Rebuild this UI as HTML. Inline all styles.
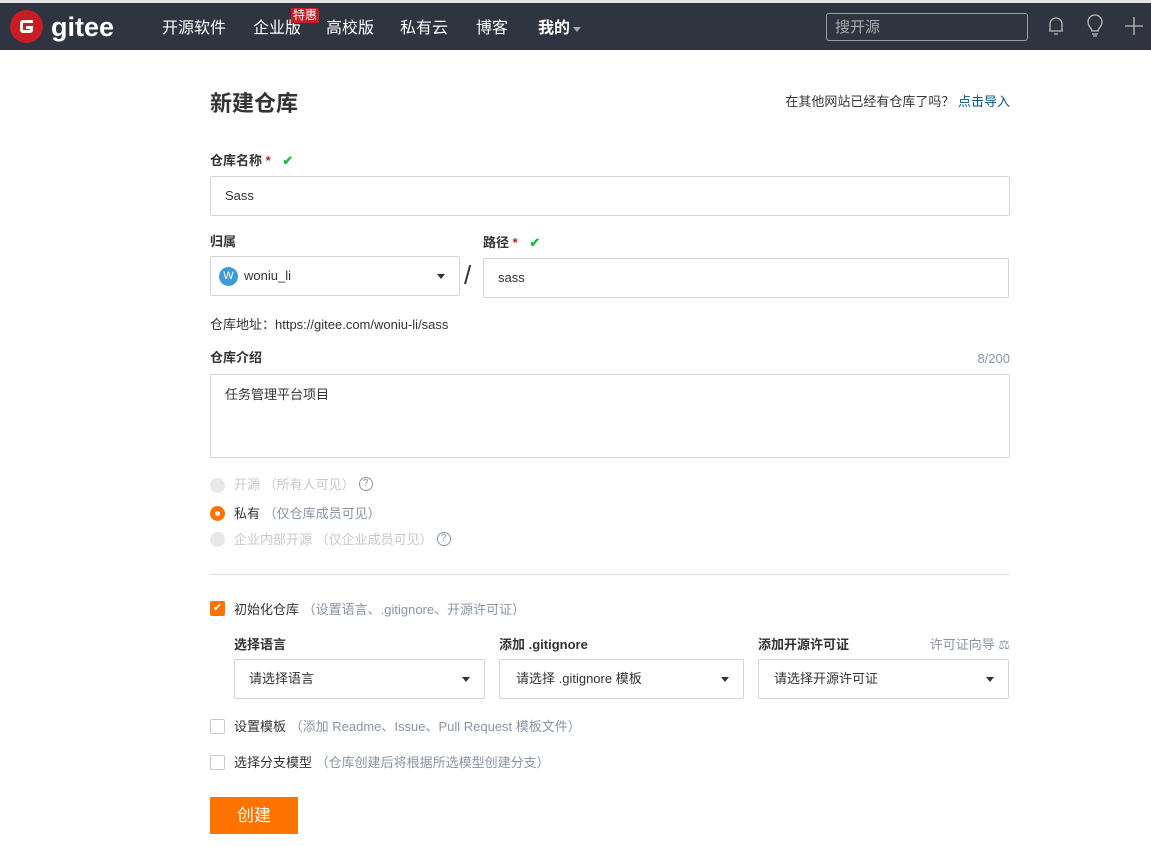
<!DOCTYPE html><html><head><meta charset="utf-8"><style>
*{box-sizing:border-box;margin:0;padding:0}
body{width:1151px;height:846px;background:#fff;font-family:"Liberation Sans","Noto Sans CJK SC",sans-serif;color:#333;font-size:13px;position:relative;overflow:hidden;line-height:1.2}
.a{position:absolute;white-space:nowrap}
.nav{position:absolute;left:0;top:3px;width:1151px;height:47px;background:#2e3440}
.top{position:absolute;left:0;top:0;width:1151px;height:3px;background:#e5e5e5}
.nl{color:#fff;font-size:16px;top:19px}
.inp{position:absolute;border:1px solid #d4d4d5;border-radius:2px;background:#fff;font-size:13px;color:#333;padding-left:14px;display:flex;align-items:center}
.lbl{font-size:13px;font-weight:bold;color:#333}
.gray{color:#8a94a6}
.caret{position:absolute;right:14px;top:50%;margin-top:-2px;border-left:4px solid transparent;border-right:4px solid transparent;border-top:5px solid #333}
.rad{position:absolute;width:15px;height:15px;border-radius:50%;background:#e8e8e8}
.chk{position:absolute;width:15px;height:15px;border:1px solid #c8c8c8;border-radius:2px;background:#fff}
.q{display:inline-block;width:14px;height:14px;border:1.3px solid #8a94a6;border-radius:50%;font-size:10px;line-height:11px;text-align:center;color:#8a94a6;vertical-align:middle;margin-left:4px;position:relative;top:-2px}
</style></head><body>
<div class="top"></div>
<div class="nav"></div>
<div class="a" style="left:10px;top:10px;width:33px;height:33px;border-radius:50%;background:#c71d23"></div>
<svg class="a" style="left:18px;top:18px" width="17" height="17" viewBox="0 0 17 17"><path d="M15 2H5a3 3 0 0 0-3 3v7a3 3 0 0 0 3 3h7a3 3 0 0 0 3-3V8H8v3h4v1H5V5h10z" fill="#fff"/></svg>
<div class="a" style="left:51px;top:11px;color:#fff;font-size:27px;font-weight:bold">gitee</div>
<div class="a nl" style="left:162px">开源软件</div>
<div class="a nl" style="left:253px">企业版</div>
<div class="a" style="left:291px;top:8px;background:#c71d23;color:#fff;font-size:12px;padding:0 2px;line-height:15px;border-radius:2px">特惠</div>
<div class="a nl" style="left:326px">高校版</div>
<div class="a nl" style="left:400px">私有云</div>
<div class="a nl" style="left:476px">博客</div>
<div class="a nl" style="left:538px;font-weight:bold">我的</div>
<div class="a" style="left:573px;top:27px;border-left:4px solid transparent;border-right:4px solid transparent;border-top:5px solid #aaa"></div>
<div class="a" style="left:826px;top:13px;width:202px;height:28px;border:1px solid #9aa0aa;border-radius:3px;color:#aaa;font-size:15px;padding:5px 8px">搜开源</div>
<svg class="a" style="left:1046px;top:15px" width="20" height="22" viewBox="0 0 20 22" fill="none" stroke="#bbb" stroke-width="1.3"><path d="M4 16V9a6 6 0 0 1 12 0v7H3h14M8 19h4"/></svg>
<svg class="a" style="left:1085px;top:14px" width="20" height="24" viewBox="0 0 20 24" fill="none" stroke="#bbb" stroke-width="1.3"><path d="M7 17c0-3-4-4-4-9a7 7 0 0 1 14 0c0 5-4 6-4 9zM7 20h6M8 22h4"/></svg>
<svg class="a" style="left:1125px;top:17px" width="18" height="18" fill="none" stroke="#bbb" stroke-width="1.3"><path d="M9 0v18M0 9h18"/></svg>

<div class="a" style="left:210px;top:91px;font-size:22px;font-weight:bold">新建仓库</div>
<div class="a" style="right:141px;top:94px;font-size:13px">在其他网站已经有仓库了吗？ <span style="color:#005980">点击导入</span></div>

<div class="a lbl" style="left:210px;top:153px">仓库名称 <span style="color:#c71d23">*</span> <span style="color:#21ba45;margin-left:8px">✔</span></div>
<div class="inp" style="left:210px;top:176px;width:800px;height:40px">Sass</div>

<div class="a lbl" style="left:210px;top:234px">归属</div>
<div class="inp" style="left:210px;top:256px;width:250px;height:40px;padding-left:8px"><span style="display:inline-block;width:19px;height:19px;border-radius:50%;background:#3e9ad8;color:#fff;font-size:11px;text-align:center;line-height:19px;margin-right:6px">W</span>woniu_li<span class="caret"></span></div>
<div class="a" style="left:464px;top:260px;font-size:26px;color:#333">/</div>
<div class="a lbl" style="left:483px;top:235px">路径 <span style="color:#c71d23">*</span> <span style="color:#21ba45;margin-left:8px">✔</span></div>
<div class="inp" style="left:483px;top:258px;width:526px;height:40px">sass</div>

<div class="a" style="left:210px;top:317px">仓库地址：https://gitee.com/woniu-li/sass</div>
<div class="a lbl" style="left:210px;top:350px">仓库介绍</div>
<div class="a gray" style="right:141px;top:351px">8/200</div>
<div class="inp" style="left:210px;top:374px;width:800px;height:84px;align-items:flex-start;padding-top:12px">任务管理平台项目</div>

<div class="rad" style="left:210px;top:478px"></div>
<div class="a" style="left:234px;top:477px;color:#c8c8c8">开源 （所有人可见）<span class="q">?</span></div>
<div class="rad" style="left:210px;top:506px;background:#fe7300"><div style="position:absolute;left:5px;top:5px;width:5px;height:5px;background:#fff;border-radius:50%"></div></div>
<div class="a" style="left:234px;top:506px">私有 <span class="gray">（仅仓库成员可见）</span></div>
<div class="rad" style="left:210px;top:532px"></div>
<div class="a" style="left:234px;top:532px;color:#c8c8c8">企业内部开源 （仅企业成员可见）<span class="q">?</span></div>

<div class="a" style="left:210px;top:574px;width:800px;height:1px;background:#dde3ea"></div>

<div class="chk" style="left:210px;top:601px;background:#fe7300;border-color:#fe7300;color:#fff;font-size:11px;line-height:13px;text-align:center">✔</div>
<div class="a" style="left:234px;top:602px">初始化仓库 <span class="gray">（设置语言、.gitignore、开源许可证）</span></div>

<div class="a lbl" style="left:234px;top:637px">选择语言</div>
<div class="a lbl" style="left:499px;top:637px">添加 .gitignore</div>
<div class="a lbl" style="left:758px;top:637px">添加开源许可证</div>
<div class="a gray" style="right:141px;top:637px">许可证向导 ⚖</div>
<div class="inp" style="left:234px;top:659px;width:251px;height:40px">请选择语言<span class="caret"></span></div>
<div class="inp" style="left:499px;top:659px;width:245px;height:40px;padding-left:16px">请选择 .gitignore 模板<span class="caret"></span></div>
<div class="inp" style="left:758px;top:659px;width:251px;height:40px;padding-left:15px">请选择开源许可证<span class="caret"></span></div>

<div class="chk" style="left:210px;top:719px"></div>
<div class="a" style="left:234px;top:719px">设置模板 <span class="gray">（添加 Readme、Issue、Pull Request 模板文件）</span></div>
<div class="chk" style="left:210px;top:755px"></div>
<div class="a" style="left:234px;top:755px">选择分支模型 <span class="gray">（仓库创建后将根据所选模型创建分支）</span></div>

<div class="a" style="left:210px;top:797px;width:88px;height:37px;background:#fe7300;color:#fff;font-size:17px;text-align:center;line-height:37px">创建</div>
</body></html>
